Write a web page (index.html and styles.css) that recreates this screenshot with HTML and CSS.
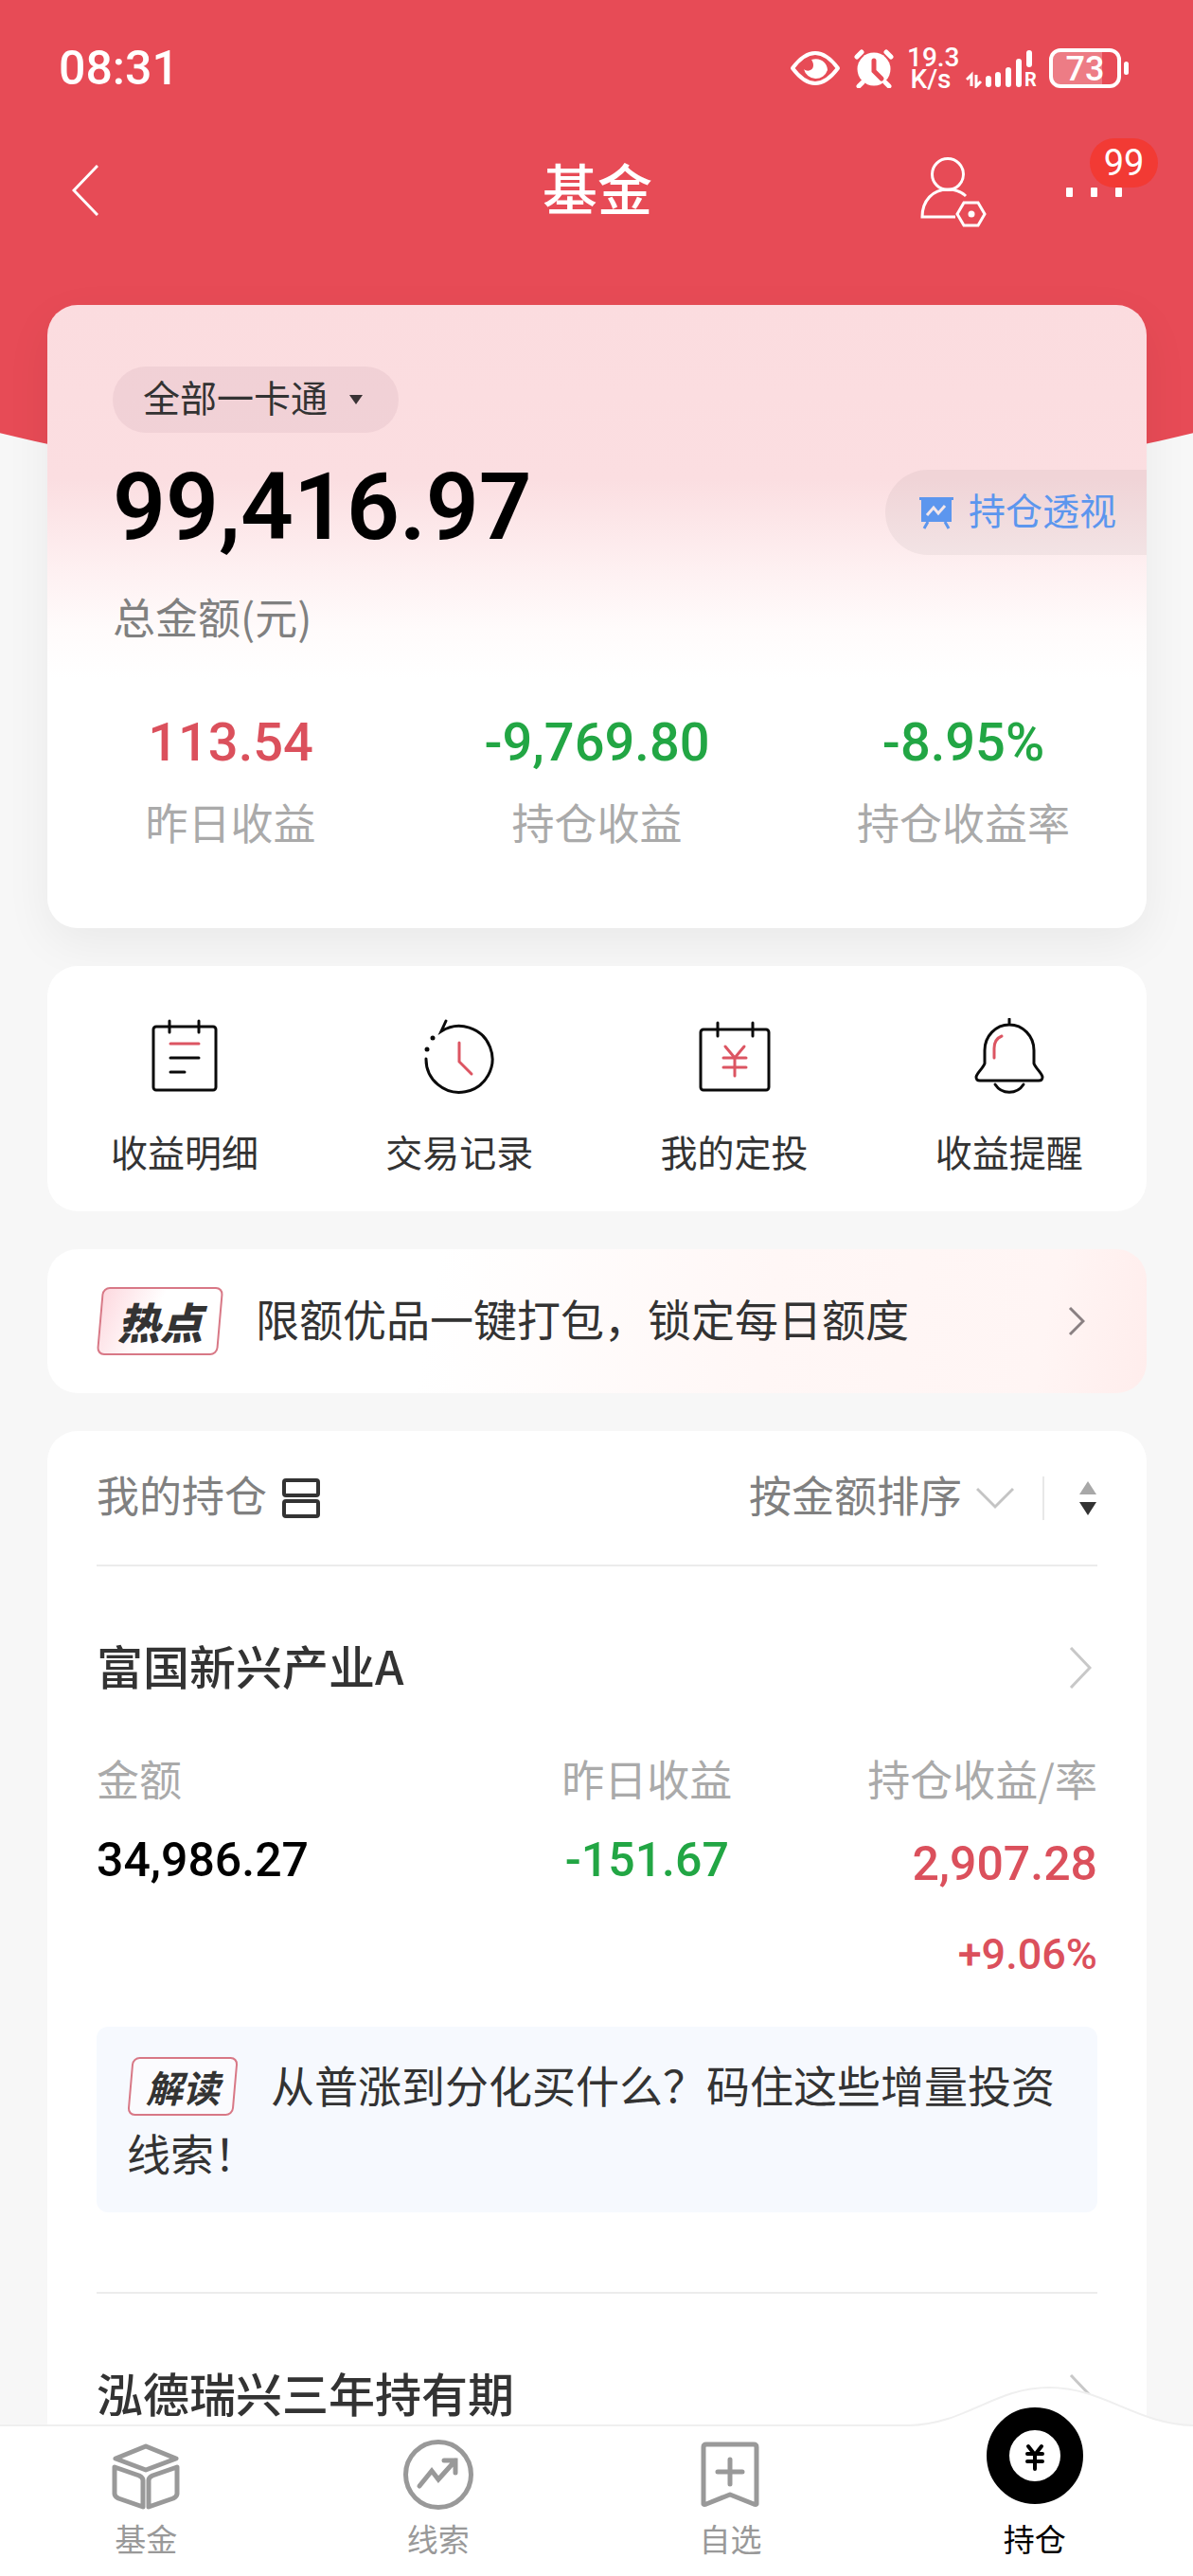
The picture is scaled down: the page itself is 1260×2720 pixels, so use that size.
FILE: index.html
```html
<!DOCTYPE html>
<html lang="zh-CN">
<head>
    <meta charset="UTF-8">
    <meta name="viewport" content="width=device-width, initial-scale=1.0">
    <title>基金</title>
    <link rel="stylesheet" href="styles.css">
</head>
<body>

    <div class="page">
        <!-- status bar -->
        <div class="status">
            <span class="time">08:31</span>
            <div class="status-icons">
                <svg width="54" height="40" viewBox="0 0 54 40" fill="none" stroke="#fff" stroke-width="4">
                    <path d="M3 20C12 8 20 4 27 4s15 4 24 16C42 32 34 36 27 36S12 32 3 20z" stroke-linejoin="round"/>
                    <path d="M15 21c3 3 10 2 10-4 0-3-1-4-2-6 9-3 17 3 17 11a13 13 0 0 1-25-1z" fill="#fff" stroke="none"/>
                </svg>
                <svg class="alarm" width="42" height="42" viewBox="0 0 42 42">
                    <circle cx="21" cy="22" r="17.500" fill="#fff"/>
                    <path d="M3 9l5-5M39 9l-5-5M9 36l-4 4M33 36l4 4" stroke="#fff" stroke-width="5" stroke-linecap="round"/>
                    <path d="M21 13v11l8 8" fill="none" stroke="#e74b56" stroke-width="5" stroke-linecap="round"/>
                </svg>
                <span class="speed">19.3<br>K/s</span>
                <svg class="signal" width="76" height="42" viewBox="0 0 76 42" fill="none" stroke="#fff">
                    <path d="M1 33l5-5v12M11 28v12l5-5" stroke-width="3"/>
                    <path d="M24 32v6M34 28v10M45 23v15M56 14v24M67 5v12" stroke-width="6" stroke-linecap="round"/>
                    <text x="62" y="40" class="roam">R</text>
                </svg>
                <div class="battery">73</div>
            </div>
        </div>

        <!-- title bar -->
        <header class="topbar">
            <button class="back" aria-label="返回">
                <svg width="28" height="54" viewBox="0 0 28 54" fill="none" stroke="#fff" stroke-width="3"><path d="M27 1L2 27l25 26"/></svg>
            </button>
            <h1>基金</h1>
            <div class="topbar-right">
                <button aria-label="账户设置">
                    <svg width="70" height="74" viewBox="0 0 70 74" fill="none" stroke="#fff" stroke-width="3">
                        <circle cx="29" cy="18" r="16.500"/>
                        <path d="M37 63H2C2 46 13 34 29 34c8 0 14 2 19 7"/>
                        <path d="M46 48h15l7 12-7 12H46l-7-12z"/>
                        <circle cx="54" cy="60" r="3.500" fill="#fff" stroke="none"/>
                    </svg>
                </button>
                <button class="more" aria-label="更多">
                    <svg width="60" height="10" viewBox="0 0 60 10" fill="#fff"><rect width="7" height="10" rx="1"/><rect x="26" width="7" height="10" rx="1"/><rect x="52" width="7" height="10" rx="1"/></svg>
                    <span class="badge">99</span>
                </button>
            </div>
        </header>

        <main>
            <!-- total -->
            <section class="card total">
                <label class="account">
                    <select aria-label="账户"><option>全部一卡通</option></select>
                    <svg width="18" height="12" viewBox="0 0 18 12"><path d="M2 1h14L9 11z" fill="#3a3335"/></svg>
                </label>
                <div class="total-row">
                    <span class="amount">99,416.97</span>
                    <a class="insight" href="#">
                        <svg width="36" height="36" viewBox="0 0 36 36">
                            <path d="M0 2h36v3h-2v23H2V5H0z" fill="#5c96ee"/>
                            <path d="M9 28l-4 7M27 28l4 7" stroke="#5c96ee" stroke-width="3"/>
                            <path d="M8 21l7-8 5 6 7-8" fill="none" stroke="#f3e6e9" stroke-width="3"/>
                        </svg>
                        <span>持仓透视</span>
                    </a>
                </div>
                <p class="total-label">总金额(元)</p>
                <div class="stats">
                    <div><strong class="up">113.54</strong><span>昨日收益</span></div>
                    <div><strong class="down">-9,769.80</strong><span>持仓收益</span></div>
                    <div><strong class="down">-8.95%</strong><span>持仓收益率</span></div>
                </div>
            </section>

            <!-- shortcuts -->
            <nav class="card shortcuts">
                <a href="#">
                    <svg width="80" height="80" viewBox="0 0 80 80" fill="none" stroke="#0a0a0a" stroke-width="3" stroke-linecap="round">
                        <rect x="7" y="9" width="66" height="67" rx="3"/>
                        <path d="M24 3v12M55 3v12M25 42h30M25 57h15"/>
                        <path d="M25 27h30" stroke="#dc5562"/>
                    </svg>
                    收益明细
                </a>
                <a href="#">
                    <svg width="80" height="80" viewBox="0 0 80 80" fill="none" stroke="#0a0a0a" stroke-width="3" stroke-linecap="round">
                        <path d="M5 43a35 35 0 1 0 16-29l5-11"/>
                        <circle cx="12" cy="21" r="2.500" fill="#0a0a0a" stroke="none"/>
                        <circle cx="6" cy="33" r="2.500" fill="#0a0a0a" stroke="none"/>
                        <path d="M40 26v20l13 13" stroke="#dc5562"/>
                    </svg>
                    交易记录
                </a>
                <a href="#">
                    <svg width="80" height="80" viewBox="0 0 80 80" fill="none" stroke="#0a0a0a" stroke-width="3" stroke-linecap="round">
                        <rect x="4" y="12" width="72" height="64" rx="3"/>
                        <path d="M22 5v14M59 5v14"/>
                        <path d="M30 30l10 12 10-12M28 42h24M28 52h24M40 42v19" stroke="#dc5562"/>
                    </svg>
                    我的定投
                </a>
                <a href="#">
                    <svg width="80" height="80" viewBox="0 0 80 80" fill="none" stroke="#0a0a0a" stroke-width="3" stroke-linecap="round" stroke-linejoin="round">
                        <path d="M40 1v6M14 48V34a26 27 0 0 1 52 0v14c2 5 8 10 9 14 0 3-1 4-4 4H9c-3 0-4-1-4-4 1-4 7-9 9-14z"/>
                        <path d="M25 70c7 11 23 11 30 0"/>
                        <path d="M24 42V32c0-6 3-11 8-13" stroke="#dc5562"/>
                    </svg>
                    收益提醒
                </a>
            </nav>

            <!-- hot topic -->
            <a class="card hot" href="#">
                <span class="tag">热点</span>
                <span class="hot-text">限额优品一键打包，锁定每日额度</span>
                <svg width="18" height="32" viewBox="0 0 18 32" fill="none" stroke="#8a8082" stroke-width="3"><path d="M2 2l14 14L2 30"/></svg>
            </a>

            <!-- holdings -->
            <section class="card holdings">
                <div class="holdings-head">
                    <h2>我的持仓</h2>
                    <button aria-label="切换视图">
                        <svg width="40" height="42" viewBox="0 0 40 42" fill="none" stroke="#333" stroke-width="4"><rect x="2" y="2" width="36" height="16" rx="2"/><rect x="2" y="24" width="36" height="16" rx="2"/></svg>
                    </button>
                    <label class="sort">
                        <select aria-label="排序"><option>按金额排序</option></select>
                        <svg width="40" height="24" viewBox="0 0 40 24" fill="none" stroke="#c4c4c4" stroke-width="3"><path d="M1 2l19 19L39 2"/></svg>
                    </label>
                    <button class="order" aria-label="升序或降序">
                        <svg width="20" height="38" viewBox="0 0 20 38"><path d="M10 1l9 14H1z" fill="#a8a8a8"/><path d="M10 37l9-14H1z" fill="#333"/></svg>
                    </button>
                </div>

                <article class="fund">
                    <a class="fund-name" href="#">
                        <h3>富国新兴产业A</h3>
                        <svg width="24" height="44" viewBox="0 0 24 44" fill="none" stroke="#c8c8c8" stroke-width="3"><path d="M2 1l20 21L2 43"/></svg>
                    </a>
                    <table>
                        <thead>
                            <tr><th>金额</th><th>昨日收益</th><th>持仓收益/率</th></tr>
                        </thead>
                        <tbody>
                            <tr><td>34,986.27</td><td class="down">-151.67</td><td class="up">2,907.28<small>+9.06%</small></td></tr>
                        </tbody>
                    </table>
                    <a class="note" href="#"><span class="tag small">解读</span>从普涨到分化买什么？码住这些增量投资线索！</a>
                </article>

                <article class="fund">
                    <a class="fund-name" href="#">
                        <h3>泓德瑞兴三年持有期</h3>
                        <svg width="24" height="44" viewBox="0 0 24 44" fill="none" stroke="#c8c8c8" stroke-width="3"><path d="M2 1l20 21L2 43"/></svg>
                    </a>
                </article>
            </section>
        </main>
    </div>

    <!-- bottom tabs -->
    <nav class="tabs">
        <svg class="hump" width="300" height="44" viewBox="0 0 300 44"><path d="M0 42C62 40 90 2 148 2s90 38 152 40v2H0z" fill="#fff"/><path d="M0 42C62 40 90 2 148 2s90 38 152 40" fill="none" stroke="#efefef" stroke-width="2"/></svg>
        <a href="#">
            <svg width="74" height="76" viewBox="0 0 74 76" fill="none" stroke="#999" stroke-width="5" stroke-linejoin="round">
                <path d="M37 8l32 13-32 12L5 21z"/>
                <path d="M4 30l26 9q4 2 4 5v28L8 63q-4-2-4-5zM70 30l-26 9q-4 2-4 5v28l26-9q4-2 4-5z"/>
            </svg>
            基金
        </a>
        <a href="#">
            <svg width="74" height="76" viewBox="0 0 74 76" fill="none" stroke="#999" stroke-width="5" stroke-linecap="round">
                <circle cx="37" cy="38" r="34.500"/>
                <path d="M17 50l13-16 7 9 18-20M43 23h12v13"/>
            </svg>
            线索
        </a>
        <a href="#">
            <svg width="74" height="76" viewBox="0 0 74 76" fill="none" stroke="#999" stroke-width="5" stroke-linecap="round" stroke-linejoin="round">
                <path d="M12 6h50q3 0 3 3v60q-1 1-3 0L37 59 12 69q-2 1-3 0V9q0-3 3-3z"/>
                <path d="M37 22v26M24 35h26"/>
            </svg>
            自选
        </a>
        <a class="active" href="#">
            <svg width="102" height="102" viewBox="0 0 102 102" fill="none" stroke="#000">
                <circle cx="51" cy="51" r="39" fill="#fff" stroke-width="24"/>
                <path d="M44 41l7 9 7-9M43 49h16M43 57h16M51 50v15" stroke-width="4" stroke-linecap="round"/>
            </svg>
            持仓
        </a>
    </nav>

</body>
</html>
```

FILE: styles.css
```css
* {
    box-sizing: border-box;
}
body {
    margin: 0;
    height: 100vh;
    display: flex;
    flex-direction: column;
    background: #f7f7f7;
    color: #333;
    font-family: "Noto Sans CJK SC", sans-serif;
}
h1, h2, h3, p {
    margin: 0;
    font-weight: 400;
}
a {
    color: inherit;
    text-decoration: none;
}
button, select {
    padding: 0;
    border: none;
    background: none;
    color: inherit;
    font: inherit;
    appearance: none;
}
svg {
    display: block;
    flex: none;
}
/* the CJK glyphs sit low in their line box */
.topbar h1, .account select, .insight span, .hot-text, .holdings-head h2, .sort select, .fund-name h3 {
    padding-bottom: 8px;
}
.page {
    flex: 1;
    min-height: 0;
    overflow-y: auto;
    scrollbar-width: none;
    position: relative;
}
/* red backdrop with a curved bottom edge */
.page::before {
    content: "";
    position: absolute;
    inset: 0 0 auto;
    height: 528px;
    background: #e74b56;
    clip-path: ellipse(100% 100% at 50% 0);
}
.status, .topbar, main {
    position: relative;
}

.status {
    display: flex;
    justify-content: space-between;
    align-items: center;
    height: 144px;
    padding: 0 76px 0 62px;
    color: #fff;
    font-family: Roboto, sans-serif;
}
.time {
    font-size: 50px;
    font-weight: 500;
}
.status-icons {
    display: flex;
    align-items: center;
}
.alarm {
    margin-left: 14px;
}
.speed {
    width: 50px;
    margin: 0 12px 0 14px;
    font-size: 28px;
    font-weight: 500;
    line-height: 23px;
    text-align: center;
}
.roam {
    font-size: 20px;
    font-weight: 700;
    fill: #fff;
    stroke: none;
}
.battery {
    position: relative;
    width: 76px;
    height: 42px;
    margin-left: 12px;
    border: 4px solid #fff;
    border-radius: 12px;
    background: linear-gradient(90deg, #ed7c85 76%, transparent 76%);
    font-size: 36px;
    font-weight: 500;
    line-height: 36px;
    text-align: center;
}
.battery::after {
    content: "";
    position: absolute;
    top: 10px;
    right: -12px;
    width: 5px;
    height: 14px;
    border-radius: 3px;
    background: #fff;
}

.topbar {
    display: grid;
    grid-template-columns: 1fr auto 1fr;
    align-items: center;
    height: 178px;
    padding: 0 74px 64px 76px;
    color: #fff;
}
.topbar h1 {
    font-size: 58px;
    font-weight: 500;
    line-height: 80px;
}
.topbar-right {
    display: flex;
    justify-content: flex-end;
    align-items: center;
    gap: 84px;
}
.topbar-right svg {
    margin-top: 4px;
}
.more {
    position: relative;
}
.badge {
    position: absolute;
    right: -37px;
    bottom: 10px;
    width: 72px;
    height: 52px;
    border-radius: 26px;
    background: #f23a34;
    font: 38px/52px Roboto, sans-serif;
    text-align: center;
}

main {
    display: grid;
    gap: 40px;
    padding: 0 49px 0 50px;
}
.card {
    background: #fff;
    border-radius: 32px;
}

.total {
    padding: 65px 0 68px;
    background: linear-gradient(#fbdcdf, #fbdee1 28%, #fef2f3 44%, #fffbfb 52%, #fff 60%);
    box-shadow: 0 16px 50px rgba(0, 0, 0, 0.06);
}
.account {
    display: inline-flex;
    align-items: center;
    gap: 20px;
    height: 70px;
    margin-left: 69px;
    padding: 0 36px 0 32px;
    border-radius: 35px;
    background: rgba(110, 60, 90, 0.07);
    font-size: 39px;
}
.total-row {
    display: flex;
    justify-content: space-between;
    align-items: center;
    height: 168px;
    padding-left: 69px;
}
.amount {
    padding-bottom: 12px;
    color: #000;
    font-family: Roboto, sans-serif;
    font-size: 98px;
    font-weight: 600;
}
.insight {
    display: flex;
    align-items: center;
    gap: 16px;
    height: 90px;
    padding: 0 32px 0 36px;
    border-radius: 45px 0 0 45px;
    background: rgba(70, 60, 70, 0.06);
    color: #5c96ee;
    font-size: 39px;
}
.total-label {
    padding-left: 69px;
    color: #808080;
    font-size: 45px;
    line-height: 52px;
}
.stats {
    display: grid;
    grid-template-columns: repeat(3, 1fr);
    margin-top: 67px;
    text-align: center;
}
.stats strong {
    display: block;
    font-family: Roboto, sans-serif;
    font-size: 56px;
    font-weight: 500;
    line-height: 80px;
}
.stats span {
    display: block;
    color: #aaa;
    font-size: 45px;
    line-height: 88px;
}
.up {
    color: #db505c;
}
.down {
    color: #22a644;
}

.shortcuts {
    display: grid;
    grid-template-columns: repeat(4, 1fr);
    padding: 55px 0 34px;
}
.shortcuts a {
    display: flex;
    flex-direction: column;
    align-items: center;
    gap: 30px;
    font-size: 39px;
    line-height: 60px;
}

.hot {
    display: flex;
    align-items: center;
    height: 152px;
    padding: 0 65px 0 52px;
    background: linear-gradient(100deg, #fff 35%, #fff7f6 65%, #fff5f4 90%, #ffedec);
    font-size: 46px;
}
.hot svg {
    margin-left: auto;
}
.hot-text {
    margin-left: 34px;
}
.tag {
    position: relative;
    z-index: 0;
    display: inline-block;
    width: 134px;
    font-size: 45px;
    font-style: italic;
    font-weight: 900;
    line-height: 72px;
    text-align: center;
}
.tag::before {
    content: "";
    position: absolute;
    z-index: -1;
    inset: 0 3px;
    border: 2px solid #d87886;
    border-radius: 8px;
    background: linear-gradient(110deg, #fdd9df, #fff 45%);
    transform: skewX(-5deg);
}
.tag.small {
    width: 118px;
    margin-right: 34px;
    font-size: 39px;
    font-weight: 700;
    line-height: 62px;
}
.tag.small::before {
    background: #fbfbfe;
}

.holdings {
    padding: 0 52px;
}
.holdings-head {
    display: flex;
    align-items: center;
    height: 143px;
    border-bottom: 2px solid #ececec;
    color: #808080;
    font-size: 45px;
}
.holdings-head h2 {
    margin-right: 16px;
    font-size: 45px;
}
.sort {
    display: flex;
    align-items: center;
    gap: 14px;
    margin-left: auto;
}
.order {
    margin-left: 30px;
    padding: 4px 0 4px 36px;
    border-left: 2px solid #e8e8e8;
}
.fund {
    padding-bottom: 84px;
}
.fund + .fund {
    border-top: 2px solid #ececec;
}
.fund-name {
    display: flex;
    justify-content: space-between;
    align-items: center;
    height: 214px;
    padding-right: 6px;
}
.fund-name h3 {
    font-size: 49px;
    font-weight: 500;
}
.fund table {
    width: 100%;
    margin-top: -30px;
    border-collapse: collapse;
    table-layout: fixed;
}
.fund th, .fund td {
    width: 30%;
    padding: 0;
    text-align: center;
    vertical-align: top;
}
.fund th {
    padding-bottom: 4px;
    color: #aaa;
    font-size: 45px;
    font-weight: 400;
    line-height: 80px;
}
.fund td {
    padding-bottom: 34px;
    font-family: Roboto, sans-serif;
    font-size: 50px;
    font-weight: 500;
    line-height: 84px;
}
.fund th:first-child, .fund td:first-child {
    width: 40%;
    text-align: left;
}
.fund td:first-child {
    color: #000;
}
.fund th:last-child, .fund td:last-child {
    text-align: right;
}
.fund td:last-child {
    padding-top: 4px;
}
.fund small {
    display: block;
    padding-top: 12px;
    font-size: 45px;
}
.note {
    display: block;
    padding: 24px 32px 28px;
    border-radius: 12px;
    background: #f6f9fe;
    font-size: 46px;
    line-height: 72px;
}

.tabs {
    position: relative;
    display: grid;
    grid-template-columns: repeat(3, 12fr) 13fr;
    height: 160px;
    border-top: 2px solid #efefef;
    background: #fff;
    color: #999;
    font-size: 33px;
    line-height: 48px;
}
.tabs a {
    position: relative;
    display: flex;
    flex-direction: column;
    justify-content: flex-end;
    align-items: center;
    gap: 5px;
    padding-bottom: 16px;
}
.tabs .active {
    gap: 12px;
    color: #000;
}
/* lifts the active coin over the top edge */
.tabs .active svg {
    margin-top: -40px;
}
.hump {
    position: absolute;
    top: -43px;
    right: 0;
}
```
